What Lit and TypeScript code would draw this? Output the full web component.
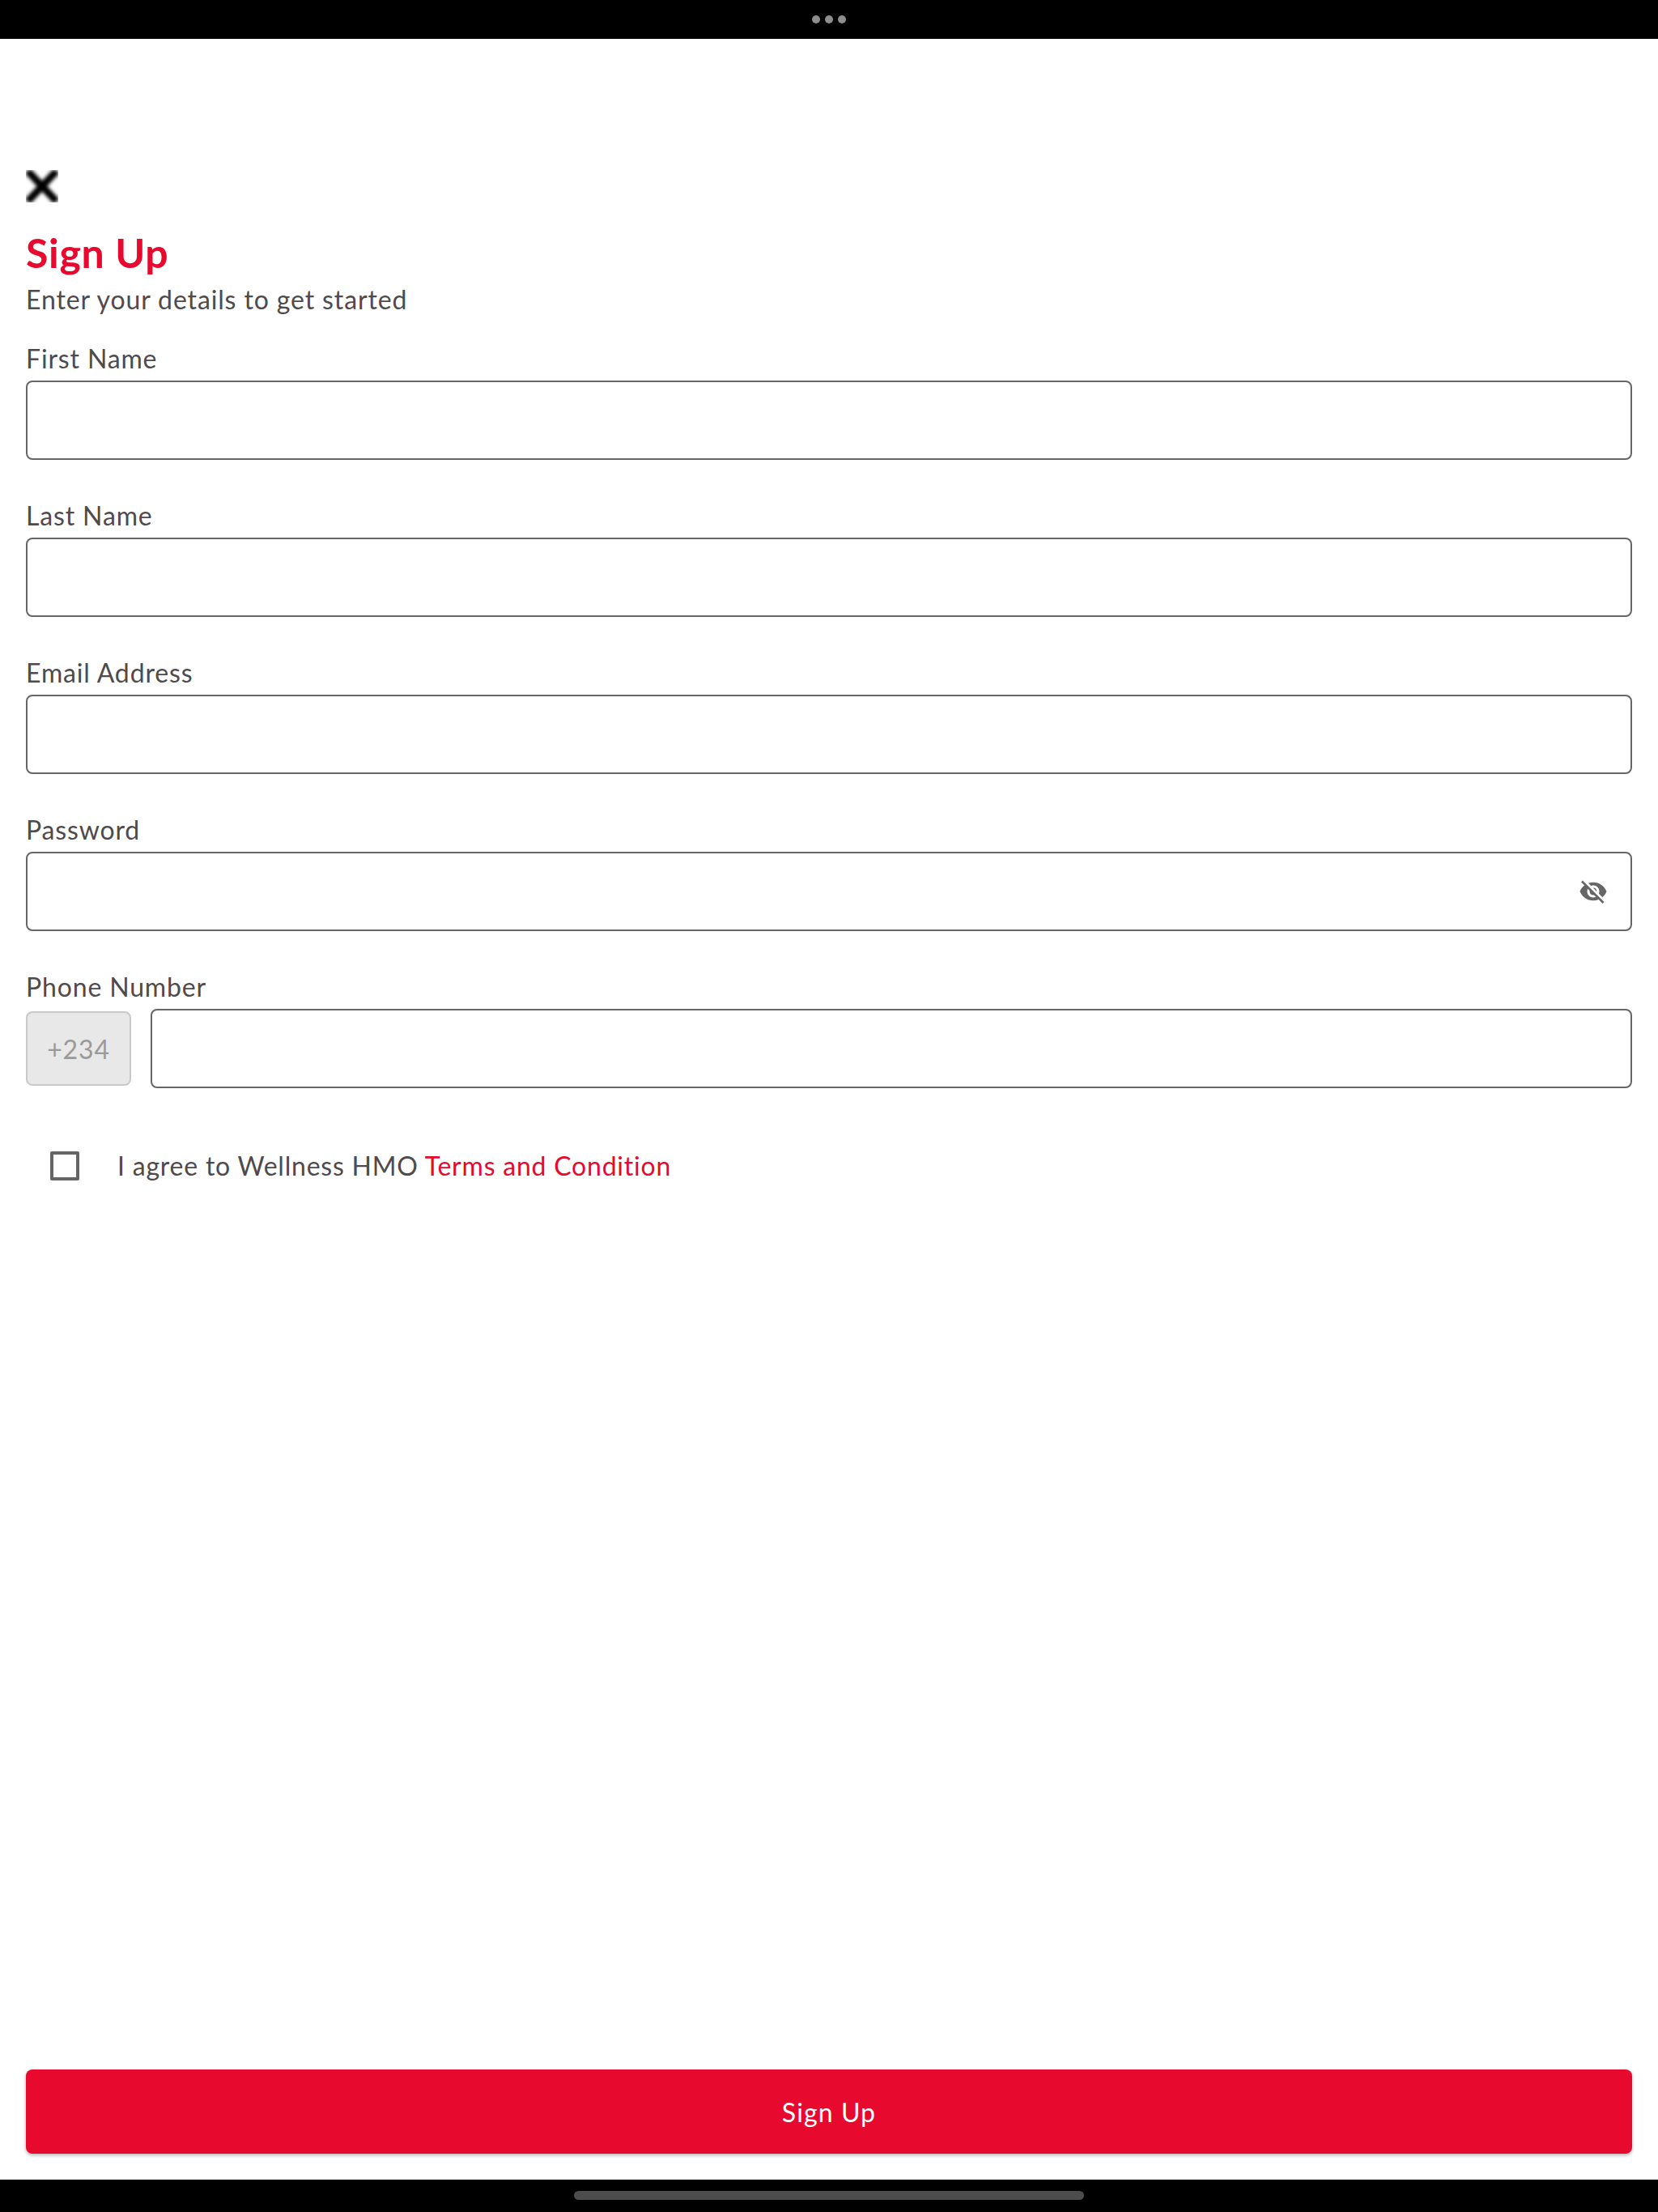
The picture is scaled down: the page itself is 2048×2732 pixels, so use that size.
import { LitElement, html, css, svg } from "lit";
import { customElement } from "lit/decorators.js";

const EYE_OFF = svg`<path d="M12 7c2.76 0 5 2.24 5 5 0 .65-.13 1.26-.36 1.83l2.92 2.92c1.51-1.26 2.7-2.89 3.43-4.75-1.73-4.39-6-7.5-11-7.5-1.4 0-2.74.25-3.98.7l2.16 2.16C10.74 7.13 11.35 7 12 7zM2 4.27l2.28 2.28.46.46C3.08 8.3 1.78 10.02 1 12c1.73 4.39 6 7.5 11 7.5 1.55 0 3.03-.3 4.38-.84l.42.42L19.73 22 21 20.73 3.27 3 2 4.27zM7.53 9.8l1.55 1.55c-.05.21-.08.43-.08.65 0 1.66 1.34 3 3 3 .22 0 .44-.03.65-.08l1.55 1.55c-.67.33-1.41.53-2.2.53-2.76 0-5-2.24-5-5 0-.79.2-1.53.53-2.2zm4.31-.78l3.15 3.15.02-.16c0-1.66-1.34-3-3-3l-.17.01z"/>`;

@customElement("app-root")
export class AppRoot extends LitElement {
  static styles = css`
    :host {
      display: block;
      width: 2048px;
      height: 2732px;
      background: #fff;
      font-family: Lato, "Noto Sans", sans-serif;
      color: #4f4a4c;
    }
    .page { display: flex; flex-direction: column; height: 100%; }
    .top-bar {
      flex: none; height: 48px; background: #000;
      display: flex; align-items: center; justify-content: center; gap: 6px;
    }
    .dot { width: 10px; height: 10px; border-radius: 50%; background: #8e8e8e; }
    .home-bar {
      flex: none; height: 40px; background: #000;
      display: flex; justify-content: center; padding-top: 14px; box-sizing: border-box;
    }
    .home-pill { width: 630px; height: 11px; border-radius: 6px; background: #4d4d4d; }
    .content {
      flex: 1; display: flex; flex-direction: column;
      padding: 162px 32px 32px; min-height: 0;
    }
    .close { width: 40px; height: 40px; display: block; overflow: hidden; }
    .close svg { display: block; width: 40px; height: 40px; filter: blur(2px); }
    h1 {
      margin: 32px 0 0; font-size: 50px; line-height: 60px; font-weight: 700;
      color: #e8092e; letter-spacing: 0.7px;
    }
    .sub { margin: 6px 0 0; font-size: 32px; line-height: 44px; letter-spacing: 0.87px; }
    .fields { display: flex; flex-direction: column; gap: 47px; margin-top: 29px; }
    .label { display: block; font-size: 32px; line-height: 44px; letter-spacing: 0.85px; height: 44px; margin-bottom: 5px; }
    .box {
      box-sizing: border-box; height: 98px; margin-top: 0;
      border: 2px solid #666; border-radius: 8px; background: #fff;
      display: flex; align-items: center;
    }
    .box input {
      flex: 1; min-width: 0; height: 100%; border: 0; outline: 0; padding: 0 24px;
      background: transparent; font: inherit; font-size: 32px; color: inherit;
    }
    .eye { flex: none; width: 36px; height: 36px; margin-right: 28px; fill: #666; display: block; }
    .phone { display: flex; align-items: center; gap: 24px; }
    .phone .box { flex: 1; }
    .prefix {
      flex: none; box-sizing: border-box; width: 130px; height: 92px;
      border: 2px solid #c9c9c9; border-radius: 8px; background: #e8e8e8;
      display: flex; align-items: center; justify-content: center;
      font-size: 32px; letter-spacing: 0.85px; color: #9a9a9a;
    }
    .agree { display: flex; align-items: center; margin: 74px 0 0 30px; font-size: 32px; line-height: 44px; letter-spacing: 0.78px; }
    .check { flex: none; box-sizing: border-box; width: 36px; height: 36px; border: 4px solid #666; border-radius: 2px; margin-right: 47px; }
    .link { color: #e8092e; }
    .submit {
      margin-top: auto; box-sizing: border-box; width: 100%; height: 104px; flex: none;
      border: 0; border-radius: 8px; background: #e8092e; color: #fff;
      font: inherit; font-size: 32px; letter-spacing: 1.1px;
      box-shadow: 0 2px 4px rgba(0, 0, 0, 0.3);
    }
  `;

  private field(label: string) {
    return html`<div>
      <label class="label">${label}</label>
      <div class="box"><input type="text" aria-label=${label} /></div>
    </div>`;
  }

  render() {
    return html`<div class="page">
      <div class="top-bar"><span class="dot"></span><span class="dot"></span><span class="dot"></span></div>
      <div class="content">
        <span class="close">
          <svg viewBox="0 0 40 40"><path d="M2 1 L38 39 M38 1 L2 39" stroke="#000" stroke-width="9" fill="none"/></svg>
        </span>
        <h1>Sign Up</h1>
        <p class="sub">Enter your details to get started</p>
        <div class="fields">
          ${this.field("First Name")}
          ${this.field("Last Name")}
          ${this.field("Email Address")}
          <div>
            <label class="label">Password</label>
            <div class="box">
              <input type="password" aria-label="Password" />
              <svg class="eye" viewBox="0 0 24 24">${EYE_OFF}</svg>
            </div>
          </div>
          <div>
            <label class="label">Phone Number</label>
            <div class="phone">
              <div class="prefix">+234</div>
              <div class="box"><input type="tel" aria-label="Phone Number" /></div>
            </div>
          </div>
        </div>
        <div class="agree">
          <span class="check"></span>
          <span>I agree to Wellness HMO <span class="link">Terms and Condition</span></span>
        </div>
        <button class="submit">Sign Up</button>
      </div>
      <div class="home-bar"><div class="home-pill"></div></div>
    </div>`;
  }
}
